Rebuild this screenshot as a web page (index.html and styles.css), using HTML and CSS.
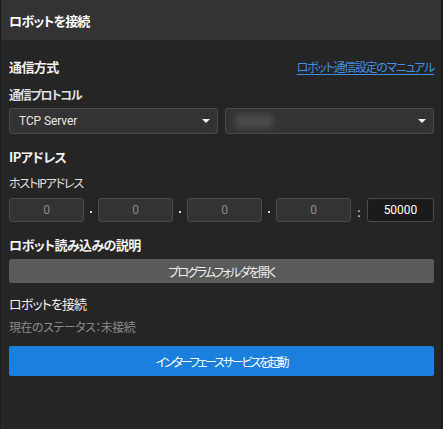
FILE: index.html
```html
<!DOCTYPE html>
<html lang="ja">
<head>
<meta charset="utf-8">
<link rel="stylesheet" href="styles.css">
</head>
<body>
<div class="panel">
  <div class="header">ロボットを接続</div>
  <div class="content">
    <div class="title-row">
      <div class="title">通信方式</div>
      <a class="link" href="#">ロボット通信設定のマニュアル</a>
    </div>
    <div class="label bold lbl-proto">通信プロトコル</div>
    <div class="selects">
      <div class="select"><span class="latin">TCP Server</span><span class="arrow"></span></div>
      <div class="select"><span class="blur"></span><span class="arrow"></span></div>
    </div>
    <div class="title t-ip">IPアドレス</div>
    <div class="label lbl-host">ホストIPアドレス</div>
    <div class="ip-row">
      <div class="ip">0</div><div class="sep"><span class="dot"></span></div>
      <div class="ip">0</div><div class="sep"><span class="dot"></span></div>
      <div class="ip">0</div><div class="sep"><span class="dot"></span></div>
      <div class="ip">0</div><div class="sep colon">:</div>
      <div class="port">50000</div>
    </div>
    <div class="title t-load">ロボット読み込みの説明</div>
    <button class="btn-gray">プログラムフォルダを開く</button>
    <div class="subtitle">ロボットを接続</div>
    <div class="status">現在のステータス：未接続</div>
    <button class="btn-blue">インターフェースサービスを起動</button>
  </div>
</div>
</body>
</html>
```
FILE: styles.css
```css
* { box-sizing: border-box; }
html, body { margin: 0; padding: 0; }
body {
  width: 443px;
  height: 429px;
  background: #242424;
  font-family: "Noto Sans CJK JP", "Noto Sans", sans-serif;
  font-feature-settings: "palt";
  color: #e8e8e8;
  overflow: hidden;
}
.panel {
  width: 443px;
  height: 429px;
  background: #252525;
  border-left: 1px solid #1c1c1c;
  border-right: 2px solid #1a1a1a;
  display: flex;
  flex-direction: column;
}
.header {
  height: 40px;
  background: #333333;
  padding-left: 8px;
  padding-top: 1px;
  display: flex;
  align-items: center;
  font-size: 13px;
  letter-spacing: -0.85px;
  font-weight: bold;
  color: #ffffff;
}
.content {
  padding: 0 7px 0 8px;
  display: flex;
  flex-direction: column;
}
.title-row {
  margin-top: 17px;
  display: flex;
  justify-content: space-between;
  align-items: center;
  height: 20px;
}
.title {
  font-size: 13px;
  letter-spacing: -0.6px;
  font-weight: bold;
  line-height: 20px;
  height: 20px;
  color: #f2f2f2;
}
.link {
  font-size: 12px;
  letter-spacing: -1.3px;
  color: #3f8fe6;
  text-decoration: underline;
  text-underline-offset: 2px;
  line-height: 18px;
}
.label {
  font-size: 12px;
  letter-spacing: -1.2px;
  line-height: 18px;
  height: 18px;
  color: #e0e0e0;
}
.bold { font-weight: bold; }
.lbl-proto { margin-top: 9px; }
.selects {
  margin-top: 4px;
  display: grid;
  grid-template-columns: 1fr 1fr;
  gap: 7px;
}
.select {
  height: 26px;
  background: #333333;
  border: 1px solid #4a4a4a;
  border-radius: 3px;
  display: flex;
  align-items: center;
  justify-content: space-between;
  padding: 0 7px 0 9px;
  font-size: 12px;
  color: #e6e6e6;
}
.latin {
  font-family: Roboto, "Liberation Sans", sans-serif;
  font-size: 12px;
  letter-spacing: -0.1px;
}
.arrow {
  width: 0;
  height: 0;
  border-left: 4px solid transparent;
  border-right: 4px solid transparent;
  border-top: 4px solid #f0f0f0;
}
.blur {
  width: 38px;
  height: 14px;
  background: #4a4a4a;
  filter: blur(3px);
  border-radius: 3px;
}
.t-ip { margin-top: 13px; }
.lbl-host { margin-top: 7px; }
.ip-row {
  margin-top: 6px;
  display: grid;
  grid-template-columns: 1fr 14px 1fr 14px 1fr 14px 1fr 16px 67px;
  height: 24px;
}
.ip {
  background: #333333;
  border: 1px solid #4a4a4a;
  border-radius: 3px;
  display: flex;
  align-items: center;
  justify-content: center;
  font-family: Roboto, sans-serif;
  font-size: 12px;
  color: #8a8a8a;
}
.sep {
  display: flex;
  align-items: center;
  justify-content: center;
  padding-top: 4px;
}
.dot {
  width: 2px;
  height: 2px;
  background: #d8d8d8;
}
.colon {
  font-size: 12px;
  color: #d8d8d8;
  padding-top: 2px;
}
.port {
  background: #1b1b1b;
  border: 1px solid #4a4a4a;
  border-radius: 3px;
  display: flex;
  align-items: center;
  justify-content: center;
  font-family: Roboto, sans-serif;
  font-size: 12px;
  color: #ffffff;
}
.t-load { margin-top: 13px; }
.btn-gray {
  margin-top: 4px;
  height: 24px;
  border: none;
  border-radius: 2px;
  background: #5a5a5a;
  color: #f0f0f0;
  font-family: inherit;
  font-feature-settings: "palt";
  font-size: 12px;
  letter-spacing: -1.7px;
  padding: 0;
}
.subtitle {
  margin-top: 11px;
  font-size: 13px;
  letter-spacing: -0.9px;
  line-height: 20px;
  height: 20px;
  color: #f0f0f0;
}
.status {
  margin-top: 4px;
  font-size: 12px;
  letter-spacing: -0.5px;
  line-height: 18px;
  height: 18px;
  color: #8a8a8a;
}
.btn-blue {
  margin-top: 10px;
  height: 30px;
  border: none;
  border-radius: 2px;
  background: #1a7fdd;
  color: #ffffff;
  font-family: inherit;
  font-feature-settings: "palt";
  font-size: 12px;
  letter-spacing: -2.2px;
  padding: 0;
}
```
